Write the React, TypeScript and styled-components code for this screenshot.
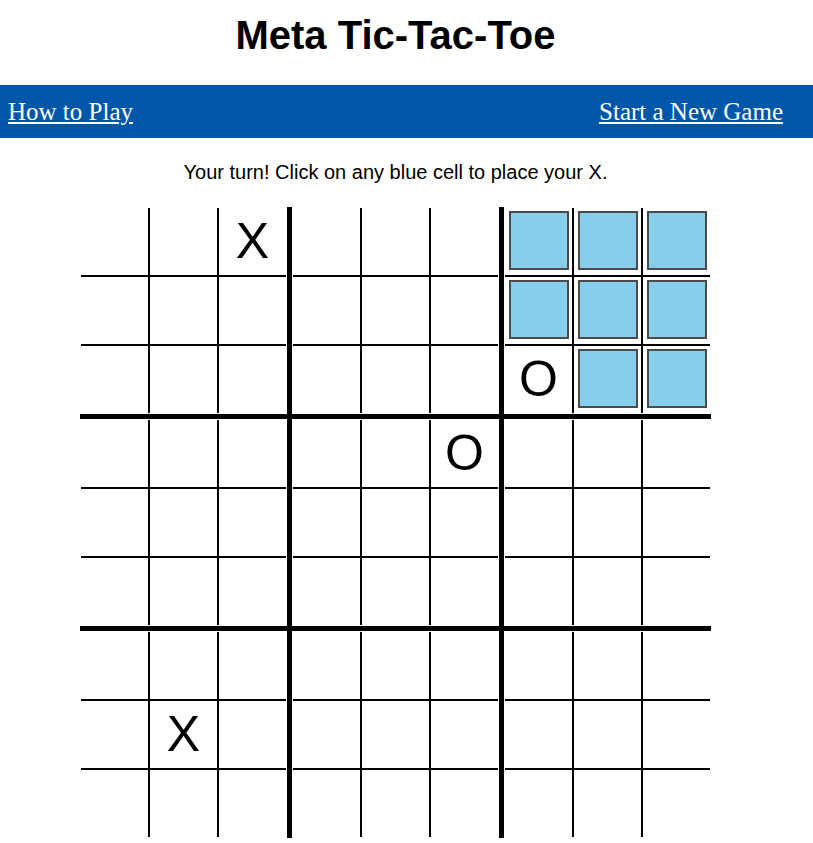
import React from "react";
import styled, { createGlobalStyle } from "styled-components";

const GlobalStyle = createGlobalStyle`
  html, body {
    margin: 0;
    padding: 0;
    background: #ffffff;
  }
  body {
    font-family: "Liberation Sans", Arial, sans-serif;
    color: #000000;
  }
`;

const Page = styled.div`
  display: flex;
  flex-direction: column;
  width: 813px;
`;

const Column = styled.div`
  display: flex;
  flex-direction: column;
  padding: 0 30px 0 8px;
`;

const Title = styled.h1`
  margin: 13px 0 27px;
  font-family: "Liberation Sans", Arial, sans-serif;
  font-weight: bold;
  font-size: 40px;
  line-height: 45px;
  text-align: center;
`;

const NavBar = styled.nav`
  display: flex;
  justify-content: space-between;
  align-items: center;
  height: 53px;
  box-sizing: border-box;
  padding: 0 30px 0 8px;
  background: #0056a8;
`;

const NavLink = styled.a`
  font-family: "Liberation Serif", "Times New Roman", serif;
  font-size: 25px;
  line-height: 29px;
  color: #ffffff;
  text-decoration: underline;
`;

const Status = styled.p`
  margin: 23px 0 23px;
  font-size: 20px;
  line-height: 23px;
  text-align: center;
`;

const Board = styled.div`
  display: grid;
  grid-template-columns: repeat(3, auto);
  align-self: flex-start;
  margin-left: 72px;
`;

const SubBoardCell = styled.div<{ $col: number; $row: number }>`
  padding: 1px;
  border-right: ${(p) => (p.$col < 2 ? "5px solid #000" : "0")};
  border-bottom: ${(p) => (p.$row < 2 ? "5px solid #000" : "0")};
`;

const SubGrid = styled.div`
  display: grid;
  grid-template-columns: repeat(3, auto);
`;

const Cell = styled.div<{ $col: number; $row: number }>`
  width: 67px;
  height: 67px;
  display: flex;
  align-items: center;
  justify-content: center;
  border-right: ${(p) => (p.$col < 2 ? "2px solid #000" : "0")};
  border-bottom: ${(p) => (p.$row < 2 ? "2px solid #000" : "0")};
`;

const Mark = styled.span`
  font-family: "Liberation Sans", Arial, sans-serif;
  font-size: 50px;
  line-height: 1;
  margin-bottom: 2px;
`;

const PlayButton = styled.button`
  width: 60px;
  height: 59px;
  margin: 0 0 3px 0;
  padding: 0;
  border: 2px solid #4a4a4a;
  background: #87ceeb;
  cursor: pointer;
`;

type CellValue = "" | "X" | "O" | "B";

const boards: CellValue[][] = [
  ["", "", "X", "", "", "", "", "", ""],
  ["", "", "", "", "", "", "", "", ""],
  ["B", "B", "B", "B", "B", "B", "O", "B", "B"],
  ["", "", "", "", "", "", "", "", ""],
  ["", "", "O", "", "", "", "", "", ""],
  ["", "", "", "", "", "", "", "", ""],
  ["", "", "", "", "X", "", "", "", ""],
  ["", "", "", "", "", "", "", "", ""],
  ["", "", "", "", "", "", "", "", ""],
];

export default function App() {
  return (
    <>
      <GlobalStyle />
      <Page>
        <Column>
          <Title>Meta Tic-Tac-Toe</Title>
        </Column>
        <NavBar>
          <NavLink href="#">How to Play</NavLink>
          <NavLink href="#">Start a New Game</NavLink>
        </NavBar>
        <Column>
          <Status>Your turn! Click on any blue cell to place your X.</Status>
          <Board>
            {boards.map((cells, b) => (
              <SubBoardCell key={b} $col={b % 3} $row={Math.floor(b / 3)}>
                <SubGrid>
                  {cells.map((v, i) => (
                    <Cell key={i} $col={i % 3} $row={Math.floor(i / 3)}>
                      {v === "B" ? (
                        <PlayButton aria-label="Place X" />
                      ) : v ? (
                        <Mark>{v}</Mark>
                      ) : null}
                    </Cell>
                  ))}
                </SubGrid>
              </SubBoardCell>
            ))}
          </Board>
        </Column>
      </Page>
    </>
  );
}
